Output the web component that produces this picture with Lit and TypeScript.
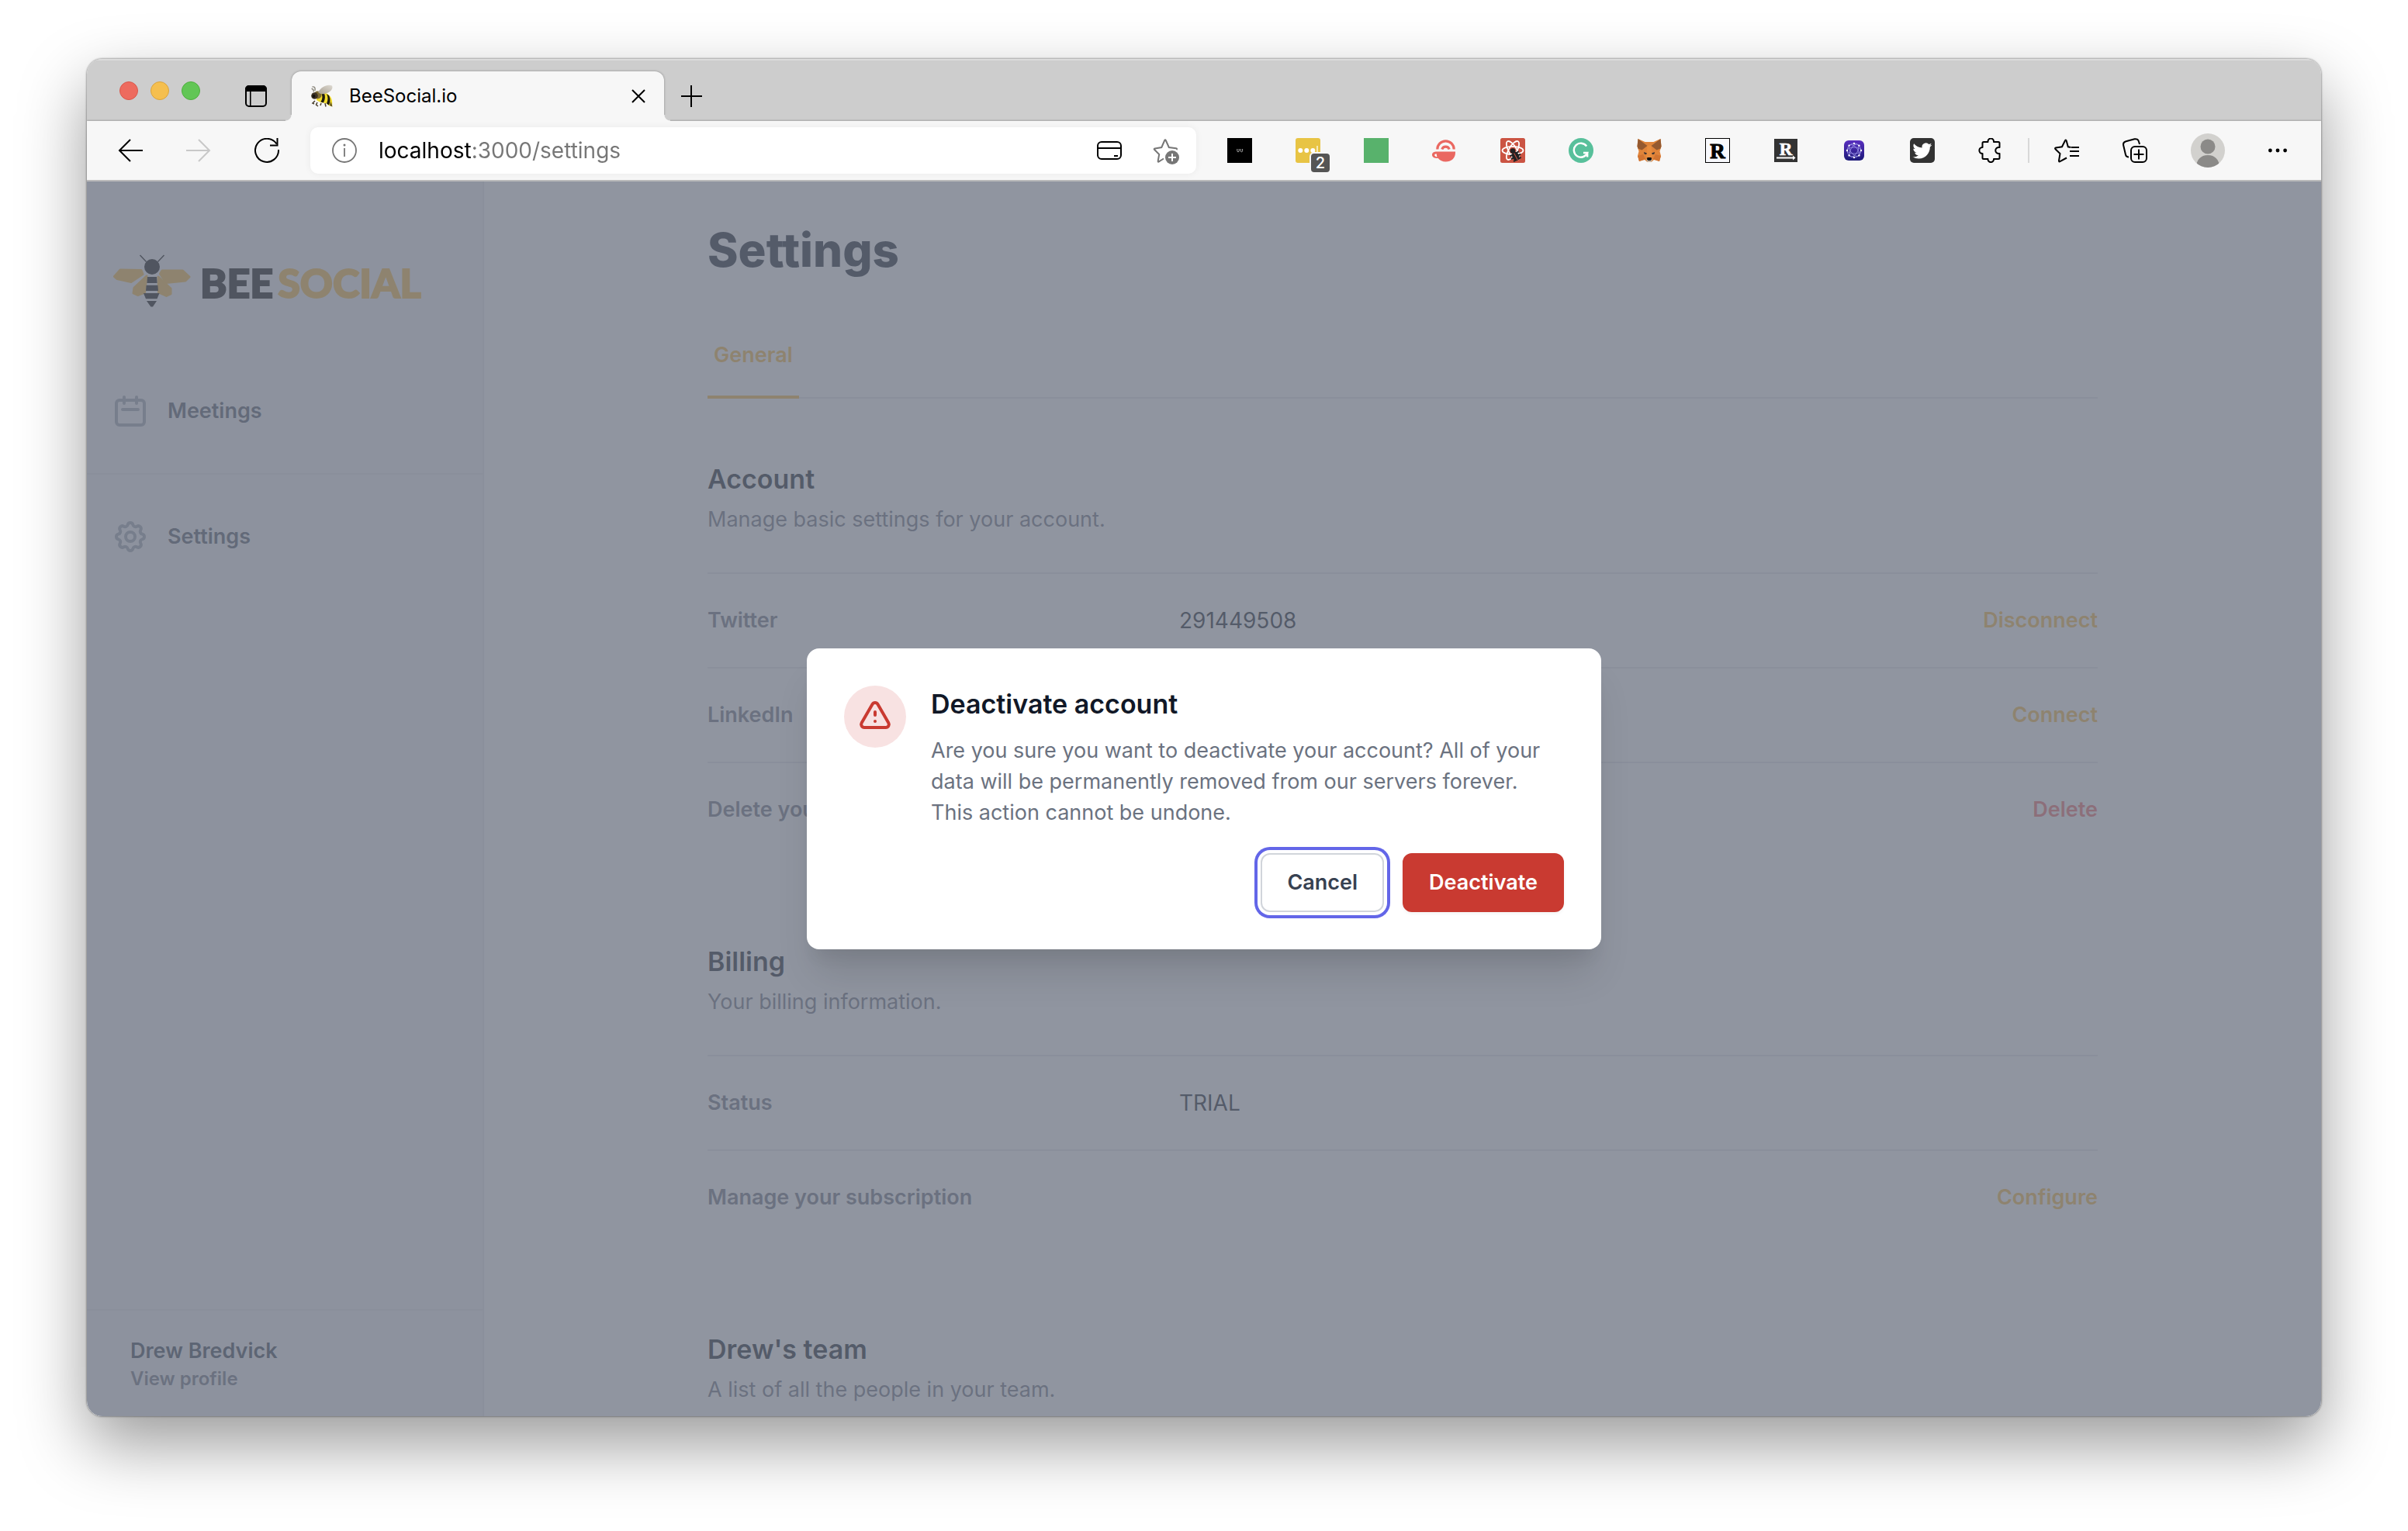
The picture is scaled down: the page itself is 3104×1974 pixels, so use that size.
import { LitElement, html, svg, css, nothing } from "lit";
import { customElement, property } from "lit/decorators.js";

const reset = css`
  *,
  *::before,
  *::after {
    box-sizing: border-box;
  }
  h1,
  h2,
  p,
  dl,
  dt,
  dd {
    margin: 0;
  }
  button,
  input {
    margin: 0;
    padding: 0;
    border: 0;
    background: none;
    color: inherit;
    font: inherit;
  }
  button {
    cursor: pointer;
  }
  a {
    color: inherit;
    text-decoration: none;
  }
  svg {
    display: block;
  }
`;

interface Extension {
  name: string;
  art: unknown;
  count?: string;
}

const extensions: Extension[] = [
  {
    name: "Dark mode",
    art: svg`<rect width="32" height="32" fill="#000"/>
      <path d="M12.8 14v2.4q0 1.4 1.2 1.4t1.2-1.4V14M17.2 14v2.4q0 1.4 1.2 1.4t1.2-1.4V14" fill="none" stroke="#aaa" stroke-width="1"/>`,
  },
  {
    name: "Password vault",
    count: "2",
    art: svg`<rect width="32" height="32" rx="3" fill="#e8c444"/>
      <circle cx="6.3" cy="16" r="3" fill="#fff"/><circle cx="14.3" cy="16" r="3" fill="#fff"/><circle cx="22.3" cy="16" r="3" fill="#fff"/>
      <rect x="27" y="10" width="2" height="12" fill="#f7e9b5"/>`,
  },
  { name: "Green square", art: svg`<rect width="32" height="32" fill="#58b26c"/>` },
  {
    name: "Coffee",
    art: svg`<g fill="none" stroke="#ea6861" stroke-width="3.2"><path d="M6.8 14.500a10.700 10.700 0 0 1 21.400 0"/><path d="M12.800 14.500a5 5 0 0 1 9.400 0"/></g>
      <path d="M6 17.500h24v1.500c0 7-5.400 11.500-12.500 11.500-4 0-7.500-1.600-9.700-4.500C3.200 26.200 0 24.800 0 21.800 0 18.800 2.500 17.500 6 17.500z" fill="#ea6861"/>
      <path d="M5.600 20.200c-3 .2-3.600 3 .8 4.200z" fill="#fff"/>`,
  },
  {
    name: "React debug tools",
    art: svg`<rect width="32" height="32" rx="2.500" fill="#cb5443"/>
      <g fill="none" stroke="#fff" stroke-width="1.800"><ellipse cx="16" cy="16" rx="13.500" ry="5.200"/><ellipse cx="16" cy="16" rx="13.500" ry="5.200" transform="rotate(60 16 16)"/><ellipse cx="16" cy="16" rx="13.500" ry="5.200" transform="rotate(120 16 16)"/></g>
      <circle cx="16" cy="16.500" r="3.300" fill="#222"/>
      <g transform="rotate(-28 19.500 23)"><ellipse cx="19.500" cy="23.500" rx="4.500" ry="6" fill="#222"/><path d="M13 20l13 0M12.600 24h13.800M14 28l11 0" stroke="#222" stroke-width="2"/><path d="M19.500 19v10" stroke="#cb5443" stroke-width="1"/></g>`,
  },
  {
    name: "Writing assistant",
    art: svg`<circle cx="16" cy="16" r="16" fill="#58c09b"/>
      <path d="M23.200 10.500a9 9 0 1 0 1 8.500h-5.200M24.200 19v5.600" fill="none" stroke="#fff" stroke-width="2.400"/>`,
  },
  {
    name: "Crypto wallet",
    art: svg`<path d="M1.500 1l9 4h11l9-4 1 10-2 6 1.500 6-2 7-7-2-3.500 3h-5l-3.500-3-7 2-2-7L2.500 17l-2-6z" fill="#e0843a"/>
      <path d="M1.500 1l12 9-7 5.500-5-2-1-3z" fill="#95592f"/><path d="M30.500 1l-12 9 7 5.500 5-2 1-3z" fill="#95592f"/>
      <path d="M13.500 10l2.500-1 2.500 1 1.500 15h-8z" fill="#e88d3e"/>
      <path d="M1 23l7-2 3 6-8 3z" fill="#d17431"/><path d="M31 23l-7-2-3 6 8 3z" fill="#d17431"/>
      <path d="M9 18l4 1.500-1 1.800-2.500-.8z" fill="#3b3433"/><path d="M23 18l-4 1.500 1 1.800 2.500-.8z" fill="#3b3433"/>
      <path d="M12 27h8l-1.500 4h-5z" fill="#c9b9a8"/><path d="M13.500 25h5l.6 2.500-1.600 1.500h-3l-1.600-1.500z" fill="#111"/>`,
  },
  {
    name: "Reader",
    art: svg`<rect x=".5" y=".5" width="31" height="31" fill="#f8f9fd" stroke="#000"/>
      <text x="16" y="25.500" text-anchor="middle" font-family="Liberation Serif, serif" font-weight="700" font-size="27" fill="#000" stroke="#000" stroke-width="1">R</text>`,
  },
  {
    name: "Reader link",
    art: svg`<rect x="1" y="1" width="30" height="30" fill="#333"/>
      <text x="16" y="21.500" text-anchor="middle" font-family="Liberation Serif, serif" font-weight="700" font-size="23" fill="#fff" stroke="#fff" stroke-width=".6">R</text>
      <path d="M4 25.500h22" stroke="#fff" stroke-width="2"/><path d="M25 22.500l3.500 3-3.500 3z" fill="#fff"/>`,
  },
  {
    name: "Network",
    art: svg`<defs><linearGradient id="net" x1="0" y1="0" x2="0" y2="1"><stop offset="0" stop-color="#5a2fc0"/><stop offset="1" stop-color="#1c1a78"/></linearGradient></defs>
      <rect x="3" y="3" width="26" height="26" rx="6" fill="url(#net)"/>
      <g fill="none" stroke="#9d96ea" stroke-width=".8"><circle cx="16" cy="16" r="9"/><ellipse cx="16" cy="16" rx="4.500" ry="9" transform="rotate(30 16 16)"/><ellipse cx="16" cy="16" rx="4.500" ry="9" transform="rotate(-40 16 16)"/><ellipse cx="16" cy="16" rx="9" ry="4"/></g>
      <g fill="#fff"><circle cx="16" cy="7" r="1.200"/><circle cx="16" cy="25" r="1.200"/><circle cx="7" cy="16" r="1.200"/><circle cx="25" cy="16" r="1.200"/><circle cx="9.600" cy="9.600" r="1.200"/><circle cx="22.400" cy="9.600" r="1.200"/><circle cx="9.600" cy="22.400" r="1.200"/><circle cx="22.400" cy="22.400" r="1.200"/></g>`,
  },
  {
    name: "Twitter",
    art: svg`<rect width="32" height="32" rx="5" fill="#333"/>
      <path transform="translate(3.400 4) scale(1.040)" fill="#fff" d="M23.953 4.570a10 10 0 01-2.825.775 4.958 4.958 0 002.163-2.723c-.951.555-2.005.959-3.127 1.184a4.920 4.920 0 00-8.384 4.482C7.690 8.095 4.067 6.130 1.640 3.162a4.822 4.822 0 00-.666 2.475c0 1.710.870 3.213 2.188 4.096a4.904 4.904 0 01-2.228-.616v.060a4.923 4.923 0 003.946 4.827 4.996 4.996 0 01-2.212.085 4.936 4.936 0 004.604 3.417 9.867 9.867 0 01-6.102 2.105c-.390 0-.779-.023-1.170-.067a13.995 13.995 0 007.557 2.209c9.053 0 13.998-7.496 13.998-13.985 0-.210 0-.420-.015-.630A9.935 9.935 0 0024 4.590z"/>`,
  },
];

@customElement("browser-bar")
export class BrowserBar extends LitElement {
  static styles = [
    reset,
    css`
      :host {
        display: block;
        flex: none;
        font-family: Inter, "Liberation Sans", sans-serif;
        color: #000;
      }
      .strip {
        display: flex;
        height: 80px;
        padding: 16px 40px 0 42px;
        background: #cdcdcd;
        box-shadow: inset 0 2px 0 #dcdcdc;
      }
      .lights {
        display: flex;
        gap: 16px;
        padding-top: 13px;
        margin-right: 58px;
      }
      .light {
        width: 24px;
        height: 24px;
        border-radius: 50%;
        border: 1px solid #d9584c;
        background: #ed6b5f;
      }
      .light.minimize {
        border-color: #dba43c;
        background: #f5bf4f;
      }
      .light.maximize {
        border-color: #4fae3e;
        background: #62c655;
      }
      .tab-actions {
        display: flex;
        align-items: center;
        margin-right: 32px;
      }
      .tab {
        position: relative;
        display: flex;
        align-items: center;
        width: 480px;
        height: 64px;
        padding: 0 22px 0 24px;
        border-radius: 12px 12px 0 0;
        background: #f7f7f7;
        box-shadow: 0 0 3px rgba(0, 0, 0, 0.35);
        font-size: 24px;
        line-height: 32px;
        clip-path: inset(-4px -8px 0 -8px);
      }
      .tab::before,
      .tab::after {
        content: "";
        position: absolute;
        bottom: 0;
        width: 8px;
        height: 8px;
      }
      .tab::before {
        left: -8px;
        background: radial-gradient(circle at 0 0, #cdcdcd 7px, #f7f7f7 8px);
      }
      .tab::after {
        right: -8px;
        background: radial-gradient(circle at 100% 0, #cdcdcd 7px, #f7f7f7 8px);
      }
      .favicon {
        margin-right: 20px;
      }
      .tab-title {
        flex: 1;
      }
      .new-tab {
        margin-left: 22px;
      }
      .toolbar {
        display: flex;
        align-items: center;
        height: 78px;
        padding: 0 44px 0 40px;
        border-bottom: 2px solid #bababa;
        background: #f7f7f7;
        box-shadow: 0 -1px 2px rgba(0, 0, 0, 0.2);
      }
      .history {
        display: flex;
        gap: 56px;
      }
      .forward {
        color: #c8c8c8;
      }
      .address {
        display: flex;
        flex: 1;
        align-items: center;
        height: 60px;
        margin: 0 40px;
        padding: 0 20px 0 28px;
        border-radius: 10px;
        background: #fff;
        box-shadow: 0 0 10px rgba(0, 0, 0, 0.06);
      }
      .info {
        margin-right: 28px;
        color: #767676;
      }
      .url {
        flex: 1;
        min-width: 0;
        height: 40px;
        font-size: 28px;
        line-height: 40px;
        outline: 0;
        background: linear-gradient(to right, #000 120px, #767676 120px);
        -webkit-background-clip: text;
        background-clip: text;
        -webkit-text-fill-color: transparent;
      }
      .favourite {
        margin-left: 40px;
      }
      .group {
        display: flex;
        align-items: center;
        gap: 56px;
      }
      .extension {
        position: relative;
        width: 32px;
        height: 32px;
      }
      .count {
        position: absolute;
        left: 18px;
        top: 18px;
        display: flex;
        align-items: center;
        justify-content: center;
        width: 28px;
        height: 28px;
        border: 2px solid #f7f7f7;
        border-radius: 6px;
        background: #555;
        color: #fff;
        font-size: 20px;
        line-height: 24px;
        font-weight: 500;
      }
      .divider {
        width: 2px;
        height: 32px;
        margin: 0 32px;
        background: #d8d8d8;
      }
    `,
  ];

  render() {
    return html`
      <div class="strip">
        <div class="lights">
          <button class="light close" aria-label="Close window"></button>
          <button class="light minimize" aria-label="Minimize window"></button>
          <button class="light maximize" aria-label="Zoom window"></button>
        </div>
        <div class="tab-actions">
          <button aria-label="Tab actions">
            <svg width="28" height="28" viewBox="0 0 28 28">
              <rect x="1" y="1" width="26" height="26" rx="4" fill="none" stroke="#000" stroke-width="2" />
              <path d="M0 8V5a5 5 0 0 1 5-5h18a5 5 0 0 1 5 5v3zM6 8h1.600v19H6z" />
            </svg>
          </button>
        </div>
        <div class="tab">
          <svg class="favicon" width="30" height="30" viewBox="0 0 30 30">
            <defs>
              <linearGradient id="wing" x1="0" y1="1" x2="1" y2="0">
                <stop offset="0" stop-color="#a89f90" />
                <stop offset="1" stop-color="#dedad2" />
              </linearGradient>
            </defs>
            <path d="M6 8Q7 2 2.500 3M4.500 9.500Q4 5 1.500 5.500" fill="none" stroke="#8b877c" stroke-width="1.400" />
            <path d="M6 21l-3 3 2 1M9 23l-1.500 3 2.500 2M14 24l-1 3M19 24l1 4.500" fill="none" stroke="#4b4130" stroke-width="1.500" />
            <path d="M8 11q8-3 14 1c5 3 7 8 6 16.500q-5-1.500-8-4.500-8-.500-12-4z" fill="#f3dc2b" />
            <path d="M13.500 10q4 6 0 12.500l3.500 1q3.500-7 .5-13zM21 12q3 6 0 12.500l3 2q2.800-6 .3-12z" fill="#1e1a10" />
            <path d="M26.500 22l2 6.500-3.500-1.500z" fill="#5c4f22" />
            <circle cx="9.500" cy="13.500" r="5" fill="#7d6a35" />
            <circle cx="5.500" cy="14.500" r="4.300" fill="#3e3324" />
            <circle cx="4.500" cy="15" r="2" fill="#15120d" />
            <path d="M10 10C14 3 22-1 28 1.500 30 6 25 11 18 12q-5 1-8-2z" fill="url(#wing)" />
          </svg>
          <span class="tab-title">BeeSocial.io</span>
          <button aria-label="Close tab">
            <svg width="20" height="20" viewBox="0 0 20 20"><path d="M1 2l16 16M17 2L1 18" stroke="#000" stroke-width="2" /></svg>
          </button>
        </div>
        <button class="new-tab" aria-label="New tab">
          <svg width="28" height="28" viewBox="0 0 28 28"><path d="M13 0v28M0 14h27" stroke="#000" stroke-width="2" /></svg>
        </button>
      </div>
      <div class="toolbar">
        <div class="history">
          <button aria-label="Back">
            <svg width="32" height="32" viewBox="0 0 32 32"><path d="M32 16H2M16 2L2 16l14 14" fill="none" stroke="currentColor" stroke-width="2" /></svg>
          </button>
          <button class="forward" aria-label="Forward">
            <svg width="32" height="32" viewBox="0 0 32 32"><path d="M0 16h30M16 2l14 14-14 14" fill="none" stroke="currentColor" stroke-width="2" /></svg>
          </button>
          <button aria-label="Reload">
            <svg width="32" height="32" viewBox="0 0 32 32"><path d="M31 15a15 15 0 1 1-2.500-7.500M29.500 0v9.500H20" fill="none" stroke="currentColor" stroke-width="2" /></svg>
          </button>
        </div>
        <div class="address">
          <button class="info" aria-label="Site information">
            <svg width="32" height="32" viewBox="0 0 32 32"><circle cx="16" cy="16" r="15" fill="none" stroke="currentColor" stroke-width="1.800" /><path d="M16 13v11" stroke="currentColor" stroke-width="1.800" /><circle cx="16" cy="9" r="1.500" fill="currentColor" /></svg>
          </button>
          <input class="url" type="text" aria-label="Address" value="localhost:3000/settings" />
          <button aria-label="Saved cards">
            <svg width="32" height="32" viewBox="0 0 32 32"><rect x="1" y="5" width="30" height="22" rx="5" fill="none" stroke="#000" stroke-width="2" /><path d="M1 13h30M22 23h5" stroke="#000" stroke-width="2" /></svg>
          </button>
          <button class="favourite" aria-label="Add to favourites">
            <svg width="36" height="36" viewBox="0 0 36 36">
              <path d="M14 28.500L7.500 32.500Q6.400 33 6.700 31.500L8.200 23 2 16.800Q1.200 15.700 2.800 15.400L11.300 14 15.200 5Q16 3.600 16.800 5L20.800 14 30 15.200Q31.800 15.600 30.500 17" fill="none" stroke="#767676" stroke-width="2" />
              <circle cx="25" cy="27" r="9" fill="#767676" /><path d="M25 22v10M20 27h10" stroke="#fff" stroke-width="2" />
            </svg>
          </button>
        </div>
        <div class="group">
          ${extensions.map(
            (e) => html`<button class="extension" aria-label=${e.name}>
              <svg width="32" height="32" viewBox="0 0 32 32">${e.art}</svg>
              ${e.count ? html`<span class="count">${e.count}</span>` : nothing}
            </button>`
          )}
          <button aria-label="Extensions">
            <svg width="32" height="32" viewBox="0 0 32 32">
              <path d="M7 5h5.500c-.500-6 8-6 7.500 0H26a1.500 1.500 0 0 1 1.500 1.500V12c-7-1-7 9 0 8v5.500A1.500 1.500 0 0 1 26 27h-6c.500 5.500-8 5.500-7.500 0H7a1.500 1.500 0 0 1-1.500-1.500V20C0 20 0 12 5.500 12V6.500A1.500 1.500 0 0 1 7 5z" fill="none" stroke="#000" stroke-width="2" stroke-linejoin="round" />
            </svg>
          </button>
        </div>
        <span class="divider"></span>
        <div class="group">
          <button aria-label="Favourites">
            <svg width="32" height="32" viewBox="0 0 32 32">
              <path d="M21.500 12l-3.700-.700-2.200-8Q15 1.600 14 3.300L10 11.300 2 12.500Q.4 13 1.500 14.200L7.500 20 6 29.200Q6 31 7.500 30.200L16 25.500" fill="none" stroke="#000" stroke-width="2" />
              <path d="M22 12h10M20 17h12M20 23h12" stroke="#000" stroke-width="2" />
            </svg>
          </button>
          <button aria-label="Collections">
            <svg width="32" height="32" viewBox="0 0 32 32">
              <rect x="11" y="11" width="20" height="20" rx="5" fill="none" stroke="#000" stroke-width="2" /><path d="M21 14.500v13M14.500 21h13" stroke="#000" stroke-width="2" />
              <path d="M8 24.500c-2 0-3.500-1-4-3L1.200 9.500C.600 7 2 5 4.500 4.300L15.500 1.300C18 .700 20.400 2 21 4.500L22 8" fill="none" stroke="#000" stroke-width="2" />
            </svg>
          </button>
          <button aria-label="Profile">
            <svg width="44" height="44" viewBox="0 0 44 44">
              <defs><clipPath id="face"><circle cx="22" cy="22" r="22" /></clipPath></defs>
              <g clip-path="url(#face)"><rect width="44" height="44" fill="#d2d1ce" /><circle cx="22" cy="17" r="9.500" fill="#8b8a88" /><path d="M7 44c0-10 6-16 15-16s15 6 15 16z" fill="#8b8a88" /></g>
            </svg>
          </button>
          <button aria-label="Menu">
            <svg width="24" height="32" viewBox="0 0 24 32"><circle cx="2.400" cy="16" r="2.400" /><circle cx="12" cy="16" r="2.400" /><circle cx="21.600" cy="16" r="2.400" /></svg>
          </button>
        </div>
      </div>
    `;
  }
}

interface Row {
  label: string;
  value?: string;
  action?: string;
  danger?: boolean;
}
interface Section {
  title: string;
  about: string;
  rows: Row[];
}

const sections: Section[] = [
  {
    title: "Account",
    about: "Manage basic settings for your account.",
    rows: [
      { label: "Twitter", value: "291449508", action: "Disconnect" },
      { label: "LinkedIn", action: "Connect" },
      { label: "Delete your account", action: "Delete", danger: true },
    ],
  },
  {
    title: "Billing",
    about: "Your billing information.",
    rows: [
      { label: "Status", value: "TRIAL" },
      { label: "Manage your subscription", action: "Configure" },
    ],
  },
  { title: "Drew's team", about: "A list of all the people in your team.", rows: [] },
];

const calendarIcon = svg`<path d="M8 7V3m8 4V3m-9 8h10M5 21h14a2 2 0 002-2V7a2 2 0 00-2-2H5a2 2 0 00-2 2v12a2 2 0 002 2z"/>`;
const cogIcon = svg`<path d="M10.325 4.317c.426-1.756 2.924-1.756 3.350 0a1.724 1.724 0 002.573 1.066c1.543-.940 3.310.826 2.370 2.370a1.724 1.724 0 001.065 2.572c1.756.426 1.756 2.924 0 3.350a1.724 1.724 0 00-1.066 2.573c.940 1.543-.826 3.310-2.370 2.370a1.724 1.724 0 00-2.572 1.065c-.426 1.756-2.924 1.756-3.350 0a1.724 1.724 0 00-2.573-1.066c-1.543.940-3.310-.826-2.370-2.370a1.724 1.724 0 00-1.065-2.572c-1.756-.426-1.756-2.924 0-3.350a1.724 1.724 0 001.066-2.573c-.940-1.543.826-3.310 2.370-2.370.996.608 2.296.070 2.572-1.065z"/><path d="M15 12a3 3 0 11-6 0 3 3 0 016 0z"/>`;

@customElement("settings-page")
export class SettingsPage extends LitElement {
  static styles = [
    reset,
    css`
      :host {
        display: flex;
        flex: 1;
        min-height: 0;
        overflow: hidden;
        background: #fff;
        font-family: Inter, "Liberation Sans", sans-serif;
        font-size: 27px;
        line-height: 40px;
      }
      .sidebar {
        display: flex;
        flex: none;
        flex-direction: column;
        width: 512px;
        border-right: 2px solid #e5e7eb;
        background: #f3f4f6;
        font-weight: 600;
      }
      .brand {
        display: flex;
        align-items: center;
        gap: 12px;
        padding: 94px 34px 54px;
      }
      .wordmark {
        display: flex;
        gap: 6px;
        padding-top: 4px;
        font-family: Lato, sans-serif;
        font-size: 52px;
        line-height: 56px;
        font-weight: 900;
      }
      .wordmark-first {
        color: #000;
        -webkit-text-stroke: 2px #000;
      }
      .wordmark-last {
        color: #f5b93c;
        -webkit-text-stroke: 2px #f5b93c;
      }
      .links {
        padding: 32px 0;
      }
      .links + .links {
        border-top: 2px solid #e5e7eb;
      }
      .link {
        display: flex;
        align-items: center;
        gap: 24px;
        padding: 24px 32px;
        color: #4b5563;
      }
      .link-icon {
        fill: none;
        stroke: #9ca3af;
        stroke-width: 2;
        stroke-linecap: round;
        stroke-linejoin: round;
      }
      .user {
        display: block;
        margin-top: auto;
        padding: 32px 56px;
        border-top: 2px solid #e5e7eb;
        color: #374151;
      }
      .user-name {
        display: block;
      }
      .user-hint {
        display: block;
        color: #6b7280;
        font-size: 24px;
        line-height: 32px;
      }
      .main {
        flex: 1;
        min-width: 0;
        padding: 52px 32px 0;
        overflow: hidden;
      }
      .content {
        max-width: 1792px;
        margin: 0 auto;
      }
      .heading {
        color: #111827;
        font-size: 60px;
        line-height: 72px;
        font-weight: 800;
      }
      .tabs {
        display: flex;
        margin-top: 80px;
        box-shadow: inset 0 -2px 0 #e5e7eb;
      }
      .tab {
        padding: 0 8px 32px;
        border-bottom: 4px solid #f5b93c;
        color: #f5b93c;
        font-weight: 600;
      }
      .section {
        margin-bottom: 112px;
      }
      .tabs + .section {
        margin-top: 80px;
      }
      .section-title {
        color: #111827;
        font-size: 34px;
        line-height: 48px;
        font-weight: 600;
      }
      .section-about {
        margin: 8px 0 48px;
        color: #6b7280;
      }
      .row {
        display: grid;
        grid-template-columns: repeat(3, 1fr);
        gap: 32px;
        padding: 40px 0;
        border-top: 2px solid #e5e7eb;
      }
      .row-label {
        color: #6b7280;
        font-weight: 600;
        white-space: nowrap;
      }
      .row-value {
        display: flex;
        grid-column: span 2;
        color: #111827;
        font-size: 28px;
      }
      .row-action {
        margin-left: auto;
        color: #f5b93c;
        font-size: 27px;
        font-weight: 600;
      }
      .row-action.danger {
        color: #f06a6a;
      }
    `,
  ];

  private link(label: string, icon: unknown) {
    return html`<a class="link" href="#${label.toLowerCase()}">
      <svg class="link-icon" width="48" height="48" viewBox="0 0 24 24">${icon}</svg>${label}
    </a>`;
  }

  render() {
    return html`
      <aside class="sidebar">
        <div class="brand">
          <svg width="100" height="68" viewBox="146 328 100 68">
            <g fill="#f5b93c" stroke="#f5b93c" stroke-width="3" stroke-linejoin="round">
              <path d="M155 348l27 .500 2 5-15 10-18-4-3.500-3z" />
              <path d="M209 349h26.500l8.500 8-5 5-25 2.500-7.500-11.500z" />
              <path d="M189 356l-16 15-1 7 5.500 2.500 9-3.500z" />
              <path d="M204 357l16 15v7l-5.500 2.500-10-4.500z" />
            </g>
            <path d="M180.500 329l8 8.500M211.500 329l-8 8.500" stroke="#000" stroke-width="1.400" />
            <circle cx="196" cy="344" r="10" />
            <path d="M190 357h12l.6 8h-13.200zM188.600 367.700h14.800l.6 7.200h-16zM185 378h20.500l-3 7.200H188zM189 388h13l-5 7.600h-2.600z" />
          </svg>
          <div class="wordmark"><span class="wordmark-first">BEE</span><span class="wordmark-last">SOCIAL</span></div>
        </div>
        <nav class="links">${this.link("Meetings", calendarIcon)}</nav>
        <nav class="links">${this.link("Settings", cogIcon)}</nav>
        <a class="user" href="#profile">
          <span class="user-name">Drew Bredvick</span>
          <span class="user-hint">View profile</span>
        </a>
      </aside>
      <main class="main">
        <div class="content">
          <h1 class="heading">Settings</h1>
          <nav class="tabs"><a class="tab" href="#general">General</a></nav>
          ${sections.map(
            (s) => html`<section class="section">
              <h2 class="section-title">${s.title}</h2>
              <p class="section-about">${s.about}</p>
              <dl>
                ${s.rows.map(
                  (r) => html`<div class="row">
                    <dt class="row-label">${r.label}</dt>
                    <dd class="row-value">
                      ${r.value ?? nothing}
                      ${r.action ? html`<button class="row-action ${r.danger ? "danger" : ""}">${r.action}</button>` : nothing}
                    </dd>
                  </div>`
                )}
              </dl>
            </section>`
          )}
        </div>
      </main>
    `;
  }
}

@customElement("confirm-dialog")
export class ConfirmDialog extends LitElement {
  @property() heading = "";
  @property() confirmLabel = "";

  static styles = [
    reset,
    css`
      :host {
        position: absolute;
        inset: 0;
        display: flex;
        align-items: center;
        justify-content: center;
        background: rgba(107, 114, 128, 0.75);
        font-family: Inter, "Liberation Sans", sans-serif;
        font-size: 27px;
        line-height: 40px;
      }
      .panel {
        width: 100%;
        max-width: 1024px;
        padding: 48px;
        border-radius: 16px;
        background: #fff;
        box-shadow: 0 40px 50px -10px rgba(0, 0, 0, 0.12), 0 20px 20px -10px rgba(0, 0, 0, 0.06);
      }
      .body {
        display: flex;
        align-items: flex-start;
        gap: 32px;
      }
      .badge {
        display: flex;
        flex: none;
        align-items: center;
        justify-content: center;
        width: 80px;
        height: 80px;
        border-radius: 50%;
        background: #f8e2e2;
      }
      .title {
        color: #111827;
        font-size: 34px;
        line-height: 48px;
        font-weight: 600;
      }
      .message {
        margin-top: 16px;
        color: #6b7280;
      }
      .actions {
        display: flex;
        justify-content: flex-end;
        gap: 24px;
        margin-top: 32px;
      }
      .action {
        padding: 16px 32px;
        border: 2px solid transparent;
        border-radius: 12px;
        font-weight: 600;
      }
      .cancel {
        border-color: #d1d5db;
        background: #fff;
        color: #374151;
        box-shadow: 0 0 0 4px #fff, 0 0 0 8px #6366e8;
      }
      .confirm {
        border-color: #c93a31;
        background: #c93a31;
        color: #fff;
        box-shadow: 0 2px 4px rgba(0, 0, 0, 0.05);
      }
    `,
  ];

  render() {
    return html`<div class="panel" role="dialog" aria-modal="true" aria-labelledby="title">
      <div class="body">
        <span class="badge">
          <svg width="48" height="48" viewBox="0 0 24 24" fill="none" stroke="#c93a31" stroke-width="2" stroke-linecap="round" stroke-linejoin="round">
            <path d="M12 9v2m0 4h.010m-6.938 4h13.856c1.540 0 2.502-1.667 1.732-3L13.732 4c-.770-1.333-2.694-1.333-3.464 0L3.340 16c-.770 1.333.192 3 1.732 3z" />
          </svg>
        </span>
        <div>
          <h2 class="title" id="title">${this.heading}</h2>
          <p class="message"><slot></slot></p>
        </div>
      </div>
      <div class="actions">
        <button class="action cancel">Cancel</button>
        <button class="action confirm">${this.confirmLabel}</button>
      </div>
    </div>`;
  }
}

@customElement("app-root")
export class AppRoot extends LitElement {
  static styles = [
    reset,
    css`
      :host {
        display: flex;
        box-sizing: border-box;
        height: 100vh;
        padding: 76px 112px 148px;
        background: #fff;
        overflow: hidden;
      }
      .window {
        display: flex;
        flex: 1;
        flex-direction: column;
        min-width: 0;
        overflow: hidden;
        border-radius: 20px;
        box-shadow: 0 0 2px 1px rgba(0, 0, 0, 0.3), 0 36px 86px rgba(0, 0, 0, 0.4);
      }
      .viewport {
        position: relative;
        display: flex;
        flex: 1;
        flex-direction: column;
        min-height: 0;
      }
    `,
  ];

  render() {
    return html`<div class="window">
      <browser-bar></browser-bar>
      <div class="viewport">
        <settings-page></settings-page>
        <confirm-dialog heading="Deactivate account" confirmLabel="Deactivate">
          Are you sure you want to deactivate your account? All of your data will be permanently removed from our servers
          forever. This action cannot be undone.
        </confirm-dialog>
      </div>
    </div>`;
  }
}
